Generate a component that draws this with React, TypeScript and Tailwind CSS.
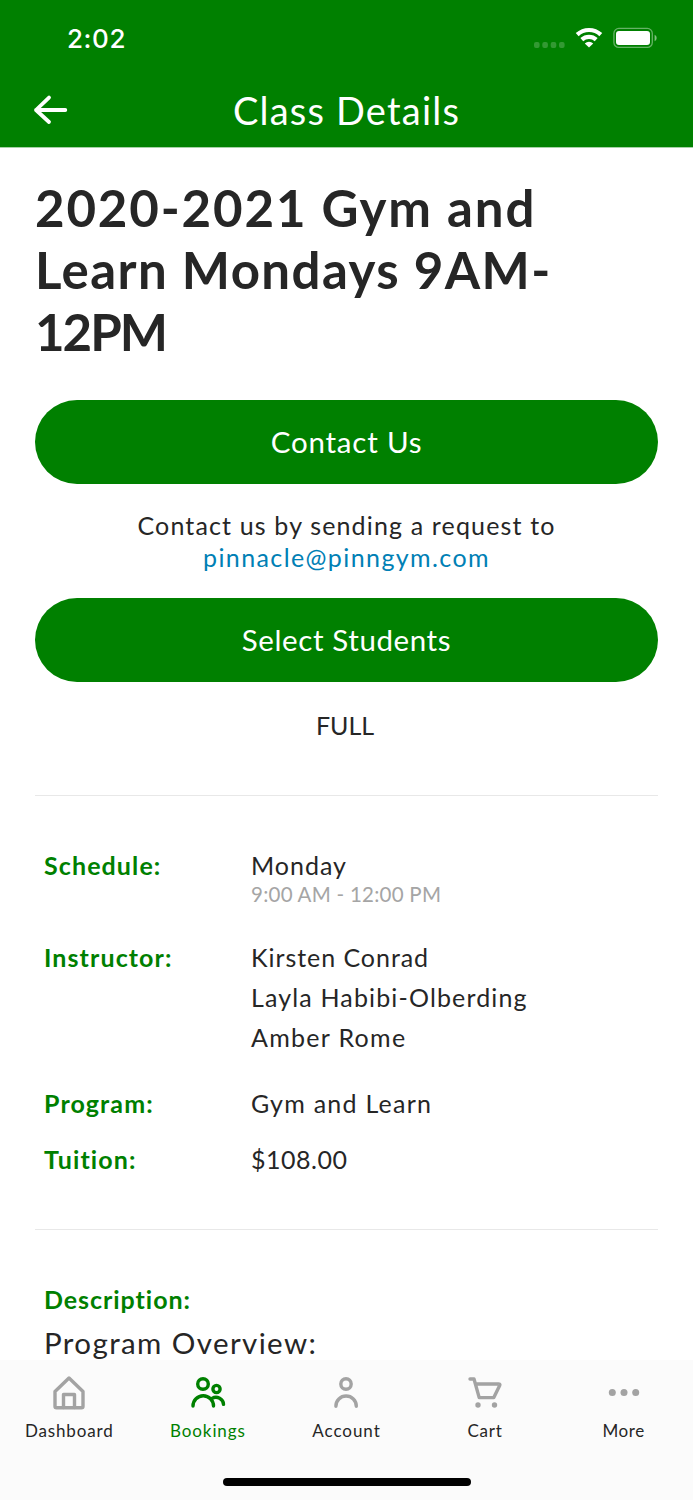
import type { ReactNode } from "react";

interface RowProps {
  label: string;
  children: ReactNode;
}

interface TabProps {
  label: string;
  labelClass: string;
  active?: boolean;
  children: ReactNode;
}

function StatusBar() {
  return (
    <div className="flex h-[76px] items-center justify-between pr-9 pl-[67px] text-white">
      <span className="mt-[2px] font-['Inter'] text-[26px] leading-8 font-medium tracking-[0.6px]">2:02</span>
      <svg width="124" height="24" viewBox="0 0 124 24" fill="currentColor">
        <g opacity="0.2">
          <rect x="1" y="16" width="5.6" height="6" rx="2" />
          <rect x="9.3" y="16" width="5.6" height="6" rx="2" />
          <rect x="17.7" y="16" width="5.6" height="6" rx="2" />
          <rect x="26" y="16" width="5.6" height="6" rx="2" />
        </g>
        <g fill="none" stroke="currentColor" strokeWidth="4.2">
          <path d="M44.2 8.6a17.4 17.4 0 0 1 23.6 0" />
          <path d="M48.8 13.6a10.6 10.6 0 0 1 14.4 0" />
        </g>
        <path d="M56 21.6l-4.2-4.2a6.3 6.3 0 0 1 8.4 0z" />
        <rect x="80.9" y="2.4" width="38.4" height="19" rx="5" fill="none" stroke="currentColor" strokeOpacity="0.4" strokeWidth="1.3" />
        <rect x="83" y="5" width="34" height="14" rx="3" />
        <path d="M121.6 8.8a3.5 3.5 0 0 1 0 6.4z" opacity="0.5" />
      </svg>
    </div>
  );
}

function Header() {
  return (
    <header className="h-[148px] shrink-0 border-b border-[#a5d2a5] bg-[#008000]">
      <StatusBar />
      <div className="grid h-[67px] grid-cols-[100px_1fr_100px] items-center text-white">
        <button className="pl-[33px]" aria-label="Back">
          <svg width="36" height="32" viewBox="0 0 36 32" fill="none" stroke="currentColor" strokeWidth="3.8" strokeLinecap="round" strokeLinejoin="round">
            <path d="M32.3 16H3M16 3.6L3 16L16 28" />
          </svg>
        </button>
        <h1 className="text-center text-[38px] leading-[46px] tracking-[1.2px]">Class Details</h1>
      </div>
    </header>
  );
}

function PillButton({ children }: { children: ReactNode }) {
  return (
    <button className="block h-[84px] w-full rounded-full bg-[#008000] text-[29.5px] text-white">{children}</button>
  );
}

function Row({ label, children }: RowProps) {
  return (
    <div className="grid grid-cols-[207px_1fr] px-[9px]">
      <dt className="font-bold tracking-[1.1px] text-[#008000]">{label}</dt>
      <dd>{children}</dd>
    </div>
  );
}

function Tab({ label, labelClass, active = false, children }: TabProps) {
  return (
    <button className="flex flex-col items-center pt-[14px]">
      <svg
        width="40"
        height="40"
        viewBox="0 0 40 40"
        fill="none"
        stroke="currentColor"
        strokeWidth="3.4"
        strokeLinecap="round"
        strokeLinejoin="round"
        className={active ? "text-[#008000]" : "text-[#a3a3a3]"}
      >
        {children}
      </svg>
      <span className={`mt-[6px] text-[17px] leading-[22px] ${labelClass} ${active ? "text-[#008000]" : "text-[#262626]"}`}>
        {label}
      </span>
    </button>
  );
}

function TabBar() {
  return (
    <nav className="h-[140px] shrink-0 bg-[#fbfbfb]">
      <div className="grid h-[118px] grid-cols-5">
        <Tab label="Dashboard" labelClass="tracking-[0.85px]">
          <path d="M6 17.5V32.2a1.5 1.5 0 0 0 1.5 1.5h25A1.5 1.5 0 0 0 34 32.2V17.5L20 4z" />
          <path d="M14.5 33.5V20.5h11v13" />
        </Tab>
        <Tab label="Bookings" labelClass="tracking-[0.9px]" active>
          <circle cx="15" cy="10" r="5.3" />
          <circle cx="28.5" cy="15" r="3.6" />
          <path d="M5 32a10.2 10.2 0 0 1 20.5 0M24 24.4c5-2.9 11.5.6 11.5 6" />
        </Tab>
        <Tab label="Account" labelClass="tracking-[0.95px]">
          <circle cx="20" cy="10" r="5.2" />
          <path d="M9.9 32.2a10.2 10.2 0 0 1 20.4 0" />
        </Tab>
        <Tab label="Cart" labelClass="tracking-[0.8px]">
          <path d="M5 5h4l5.2 18.6h14.6l6-12.4Q35.3 10 33.5 10H10.6" />
          <circle cx="13" cy="31" r="2.7" fill="currentColor" stroke="none" />
          <circle cx="29.5" cy="31" r="2.7" fill="currentColor" stroke="none" />
        </Tab>
        <Tab label="More" labelClass="tracking-[0.6px]">
          <g fill="currentColor" stroke="none">
            <circle cx="8.3" cy="18.5" r="3.5" />
            <circle cx="20" cy="18.5" r="3.5" />
            <circle cx="31.7" cy="18.5" r="3.5" />
          </g>
        </Tab>
      </div>
      <div className="mx-auto h-2 w-[248px] rounded-full bg-black" />
    </nav>
  );
}

export default function App() {
  return (
    <div className="flex h-[1500px] w-[693px] flex-col overflow-hidden bg-white font-['Lato','Open_Sans',sans-serif] text-[#262626]">
      <Header />
      <main className="min-h-0 flex-1 overflow-hidden px-[35px] pt-[29px] text-[25px]">
        <h2 className="text-[51px] leading-[62px] font-bold">
          <span className="block tracking-[1.85px]">2020-2021 Gym and</span>
          <span className="block tracking-[1.4px]">Learn Mondays 9AM-</span>
          <span className="block tracking-[-2px]">12PM</span>
        </h2>
        <div className="mt-[37px]">
          <PillButton>
            <span className="tracking-[0.8px]">Contact Us</span>
          </PillButton>
        </div>
        <p className="my-[25px] text-center leading-8">
          <span className="block tracking-[1.15px]">Contact us by sending a request to</span>
          <a className="block tracking-[1.4px] text-[#0080b5]">pinnacle@pinngym.com</a>
        </p>
        <PillButton>
          <span className="tracking-[0.6px]">Select Students</span>
        </PillButton>
        <p className="mt-[27px] pr-[3px] text-center leading-8">FULL</p>

        <dl className="mt-[54px] border-y border-[#e8e8e8] pt-[53px] pb-[50px]">
          <div className="leading-8">
            <Row label="Schedule:">
              <p className="tracking-[1px]">Monday</p>
              <p className="text-[20.5px] leading-[26px] tracking-[0.25px] text-[#a5a5a5]">9:00 AM - 12:00 PM</p>
            </Row>
          </div>
          <div className="mt-[30px] leading-10">
            <Row label="Instructor:">
              <p className="tracking-[0.95px]">Kirsten Conrad</p>
              <p className="tracking-[1.15px]">Layla Habibi-Olberding</p>
              <p className="tracking-[1.3px]">Amber Rome</p>
            </Row>
          </div>
          <div className="mt-[26px] leading-10">
            <Row label="Program:">
              <p className="tracking-[1.25px]">Gym and Learn</p>
            </Row>
          </div>
          <div className="mt-4 leading-10">
            <Row label="Tuition:">
              <p className="tracking-[0.5px]">$108.00</p>
            </Row>
          </div>
        </dl>

        <section className="px-[9px] pt-[49px]">
          <h3 className="leading-10 font-bold tracking-[0.95px] text-[#008000]">Description:</h3>
          <p className="text-[29.5px] leading-[48px] tracking-[1.4px]">Program Overview:</p>
        </section>
      </main>
      <TabBar />
    </div>
  );
}
